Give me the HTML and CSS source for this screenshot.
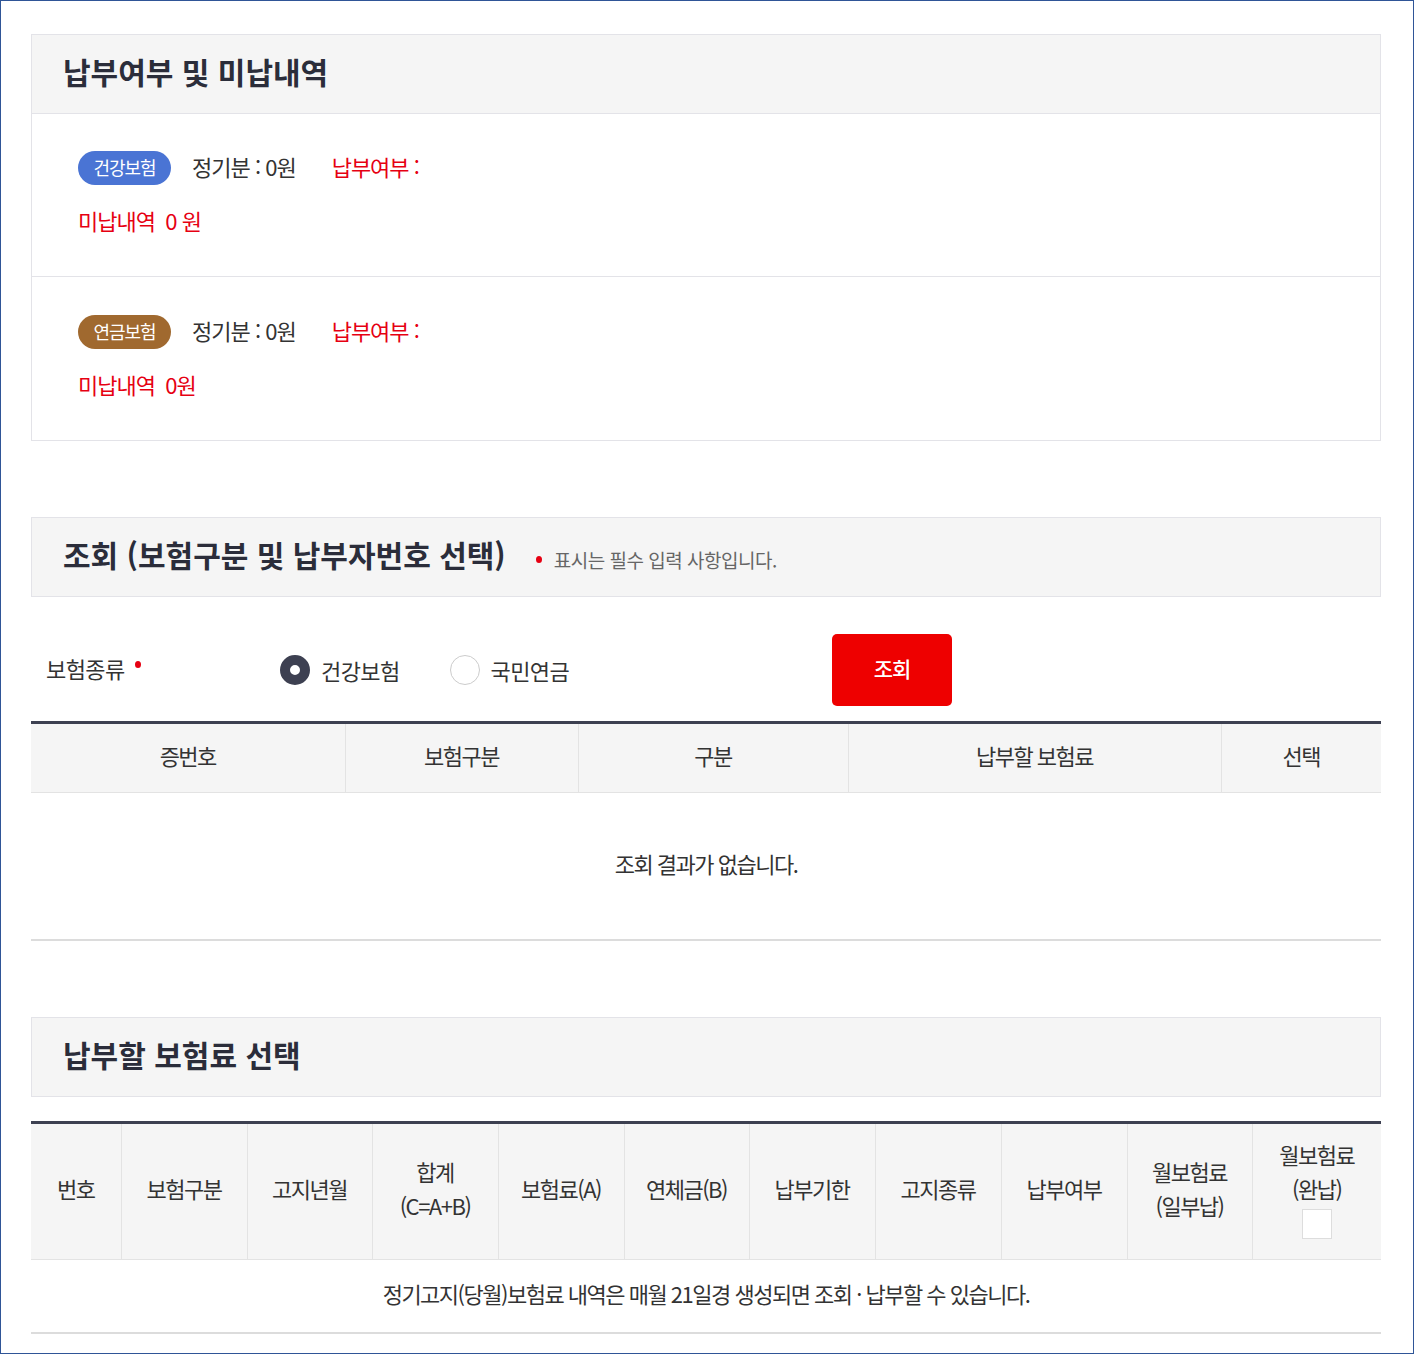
FILE: index.html
```html
<!DOCTYPE html>
<html lang="ko">
<head>
  <meta charset="UTF-8">
  <title>납부여부 및 미납내역</title>
  <link rel="stylesheet" href="styles.css">
</head>
<body>
  <div class="page">
    <div class="box-title">
      <h2>납부여부 및 미납내역</h2>
    </div>
    <div class="status-box">
      <div class="status-row">
        <div class="status-line">
          <span class="badge health">건강보험</span>
          <span class="regular">정기분 : 0원</span>
          <span class="paid">납부여부 :</span>
        </div>
        <div class="unpaid">미납내역 &nbsp;0 원</div>
      </div>
      <div class="status-row">
        <div class="status-line">
          <span class="badge pension">연금보험</span>
          <span class="regular">정기분 : 0원</span>
          <span class="paid">납부여부 :</span>
        </div>
        <div class="unpaid">미납내역 &nbsp;0원</div>
      </div>
    </div>

    <div class="box-title section">
      <h2>조회 (보험구분 및 납부자번호 선택)</h2>
      <span class="required-note"><i class="dot"></i>표시는 필수 입력 사항입니다.</span>
    </div>
    <div class="search-row">
      <div class="field-label">보험종류<i class="dot"></i></div>
      <label class="radio checked"><span class="circle"></span>건강보험</label>
      <label class="radio"><span class="circle"></span>국민연금</label>
      <button class="btn-search">조회</button>
    </div>
    <table class="grid grid-search">
      <colgroup>
        <col style="width:314px">
        <col style="width:233px">
        <col style="width:270px">
        <col style="width:373px">
        <col>
      </colgroup>
      <thead>
        <tr>
          <th>증번호</th>
          <th>보험구분</th>
          <th>구분</th>
          <th>납부할 보험료</th>
          <th>선택</th>
        </tr>
      </thead>
      <tbody>
        <tr>
          <td colspan="5" class="empty">조회 결과가 없습니다.</td>
        </tr>
      </tbody>
    </table>

    <div class="box-title section">
      <h2>납부할 보험료 선택</h2>
    </div>
    <table class="grid grid-select">
      <colgroup>
        <col style="width:90px">
        <col style="width:126px">
        <col style="width:125px">
        <col style="width:126px">
        <col style="width:126px">
        <col style="width:125px">
        <col style="width:126px">
        <col style="width:126px">
        <col style="width:126px">
        <col style="width:125px">
        <col>
      </colgroup>
      <thead>
        <tr>
          <th>번호</th>
          <th>보험구분</th>
          <th>고지년월</th>
          <th>합계<br>(C=A+B)</th>
          <th>보험료(A)</th>
          <th>연체금(B)</th>
          <th>납부기한</th>
          <th>고지종류</th>
          <th>납부여부</th>
          <th>월보험료<br>(일부납)</th>
          <th>월보험료<br>(완납)<br><span class="checkbox"></span></th>
        </tr>
      </thead>
      <tbody>
        <tr>
          <td colspan="11" class="notice">정기고지(당월)보험료 내역은 매월 21일경 생성되면 조회 · 납부할 수 있습니다.</td>
        </tr>
      </tbody>
    </table>
  </div>
</body>
</html>
```

FILE: styles.css
```css
* {
  box-sizing: border-box;
}
body {
  margin: 0;
  font-family: "Noto Sans CJK KR", "Noto Sans", sans-serif;
  color: #333;
  background: #fff;
}
.page {
  width: 1414px;
  height: 1354px;
  border: 1px solid #2f5597;
  padding: 33px 32px 0 30px;
}
.box-title {
  display: flex;
  align-items: center;
  height: 80px;
  padding: 0 31px 6px;
  background: #f5f5f5;
  border: 1px solid #e3e3e8;
}
.box-title h2 {
  margin: 0;
  font-size: 30px;
  font-weight: 700;
  letter-spacing: 0;
  color: #2b2d3a;
}
.box-title.section {
  margin-top: 76px;
}
.required-note {
  display: flex;
  align-items: center;
  margin: 10px 0 0 30px;
  font-size: 19px;
  letter-spacing: -0.5px;
  color: #666;
}
.dot {
  display: inline-block;
  width: 6px;
  height: 7px;
  border-radius: 50%;
  background: #e60012;
  margin-right: 12px;
}
.status-box {
  border: 1px solid #e3e3e8;
  border-top: none;
}
.status-row {
  padding: 37px 46px 37px;
}
.status-row + .status-row {
  border-top: 1px solid #e3e3e8;
  padding: 38px 46px 37px;
}
.status-line {
  display: flex;
  align-items: center;
  height: 34px;
  font-size: 22px;
  letter-spacing: -1px;
}
.status-line .regular,
.status-line .paid {
  padding-bottom: 5px;
}
.badge {
  display: inline-flex;
  align-items: center;
  justify-content: center;
  width: 93px;
  height: 34px;
  padding-bottom: 2px;
  border-radius: 17px;
  color: #fff;
  font-size: 18px;
  letter-spacing: -1px;
  margin-right: 21px;
}
.badge.health {
  background: #4a74d4;
}
.badge.pension {
  background: #a0692f;
}
.regular {
  color: #333;
  margin-right: 36px;
}
.paid,
.unpaid {
  color: #e60012;
}
.unpaid {
  margin-top: 20px;
  height: 34px;
  line-height: 30px;
  font-size: 22px;
  letter-spacing: -1px;
}
.search-row {
  display: flex;
  align-items: center;
  height: 72px;
  margin-top: 37px;
  padding-left: 15px;
}
.field-label {
  display: flex;
  align-items: center;
  width: 234px;
  font-size: 22px;
  letter-spacing: -0.6px;
  margin-top: -4px;
}
.field-label .dot {
  margin: -8px 0 0 10px;
}
.radio {
  display: flex;
  align-items: center;
  font-size: 22px;
  letter-spacing: -0.6px;
  margin-right: 50px;
}
.radio .circle {
  width: 30px;
  height: 30px;
  border-radius: 50%;
  border: 1px solid #ccc;
  background: #fff;
  margin-right: 11px;
}
.radio.checked .circle {
  border: 10px solid #3d4051;
}
.btn-search {
  width: 120px;
  height: 72px;
  margin-left: 213px;
  padding-bottom: 5px;
  border: none;
  border-radius: 5px;
  background: #ee0000;
  color: #fff;
  font-family: inherit;
  font-size: 21px;
  font-weight: 500;
  letter-spacing: -1px;
}
.grid {
  width: 100%;
  border-collapse: collapse;
  table-layout: fixed;
  border-top: 3px solid #3d4051;
  border-bottom: 2px solid #dcdcdc;
}
.grid-search {
  margin-top: 15px;
}
.grid-select {
  margin-top: 24px;
}
.grid th {
  background: #f5f5f5;
  font-weight: 400;
  font-size: 22px;
  letter-spacing: -1.5px;
  color: #333;
  border-bottom: 1px solid #e3e3e3;
  border-left: 1px solid #e3e3e3;
  line-height: 34px;
  padding: 0 0 6px;
}
.grid th:first-child {
  border-left: none;
}
.grid-search th {
  height: 70px;
}
.grid-select th {
  height: 137px;
}
.grid td {
  text-align: center;
  font-size: 22px;
  letter-spacing: -1.5px;
  color: #333;
  padding: 0 0 6px;
}
.empty {
  height: 147px;
}
.notice {
  height: 74px;
}
.checkbox {
  display: inline-block;
  width: 30px;
  height: 30px;
  margin-top: 4px;
  background: #fff;
  border: 1px solid #ddd;
  vertical-align: top;
}
```
